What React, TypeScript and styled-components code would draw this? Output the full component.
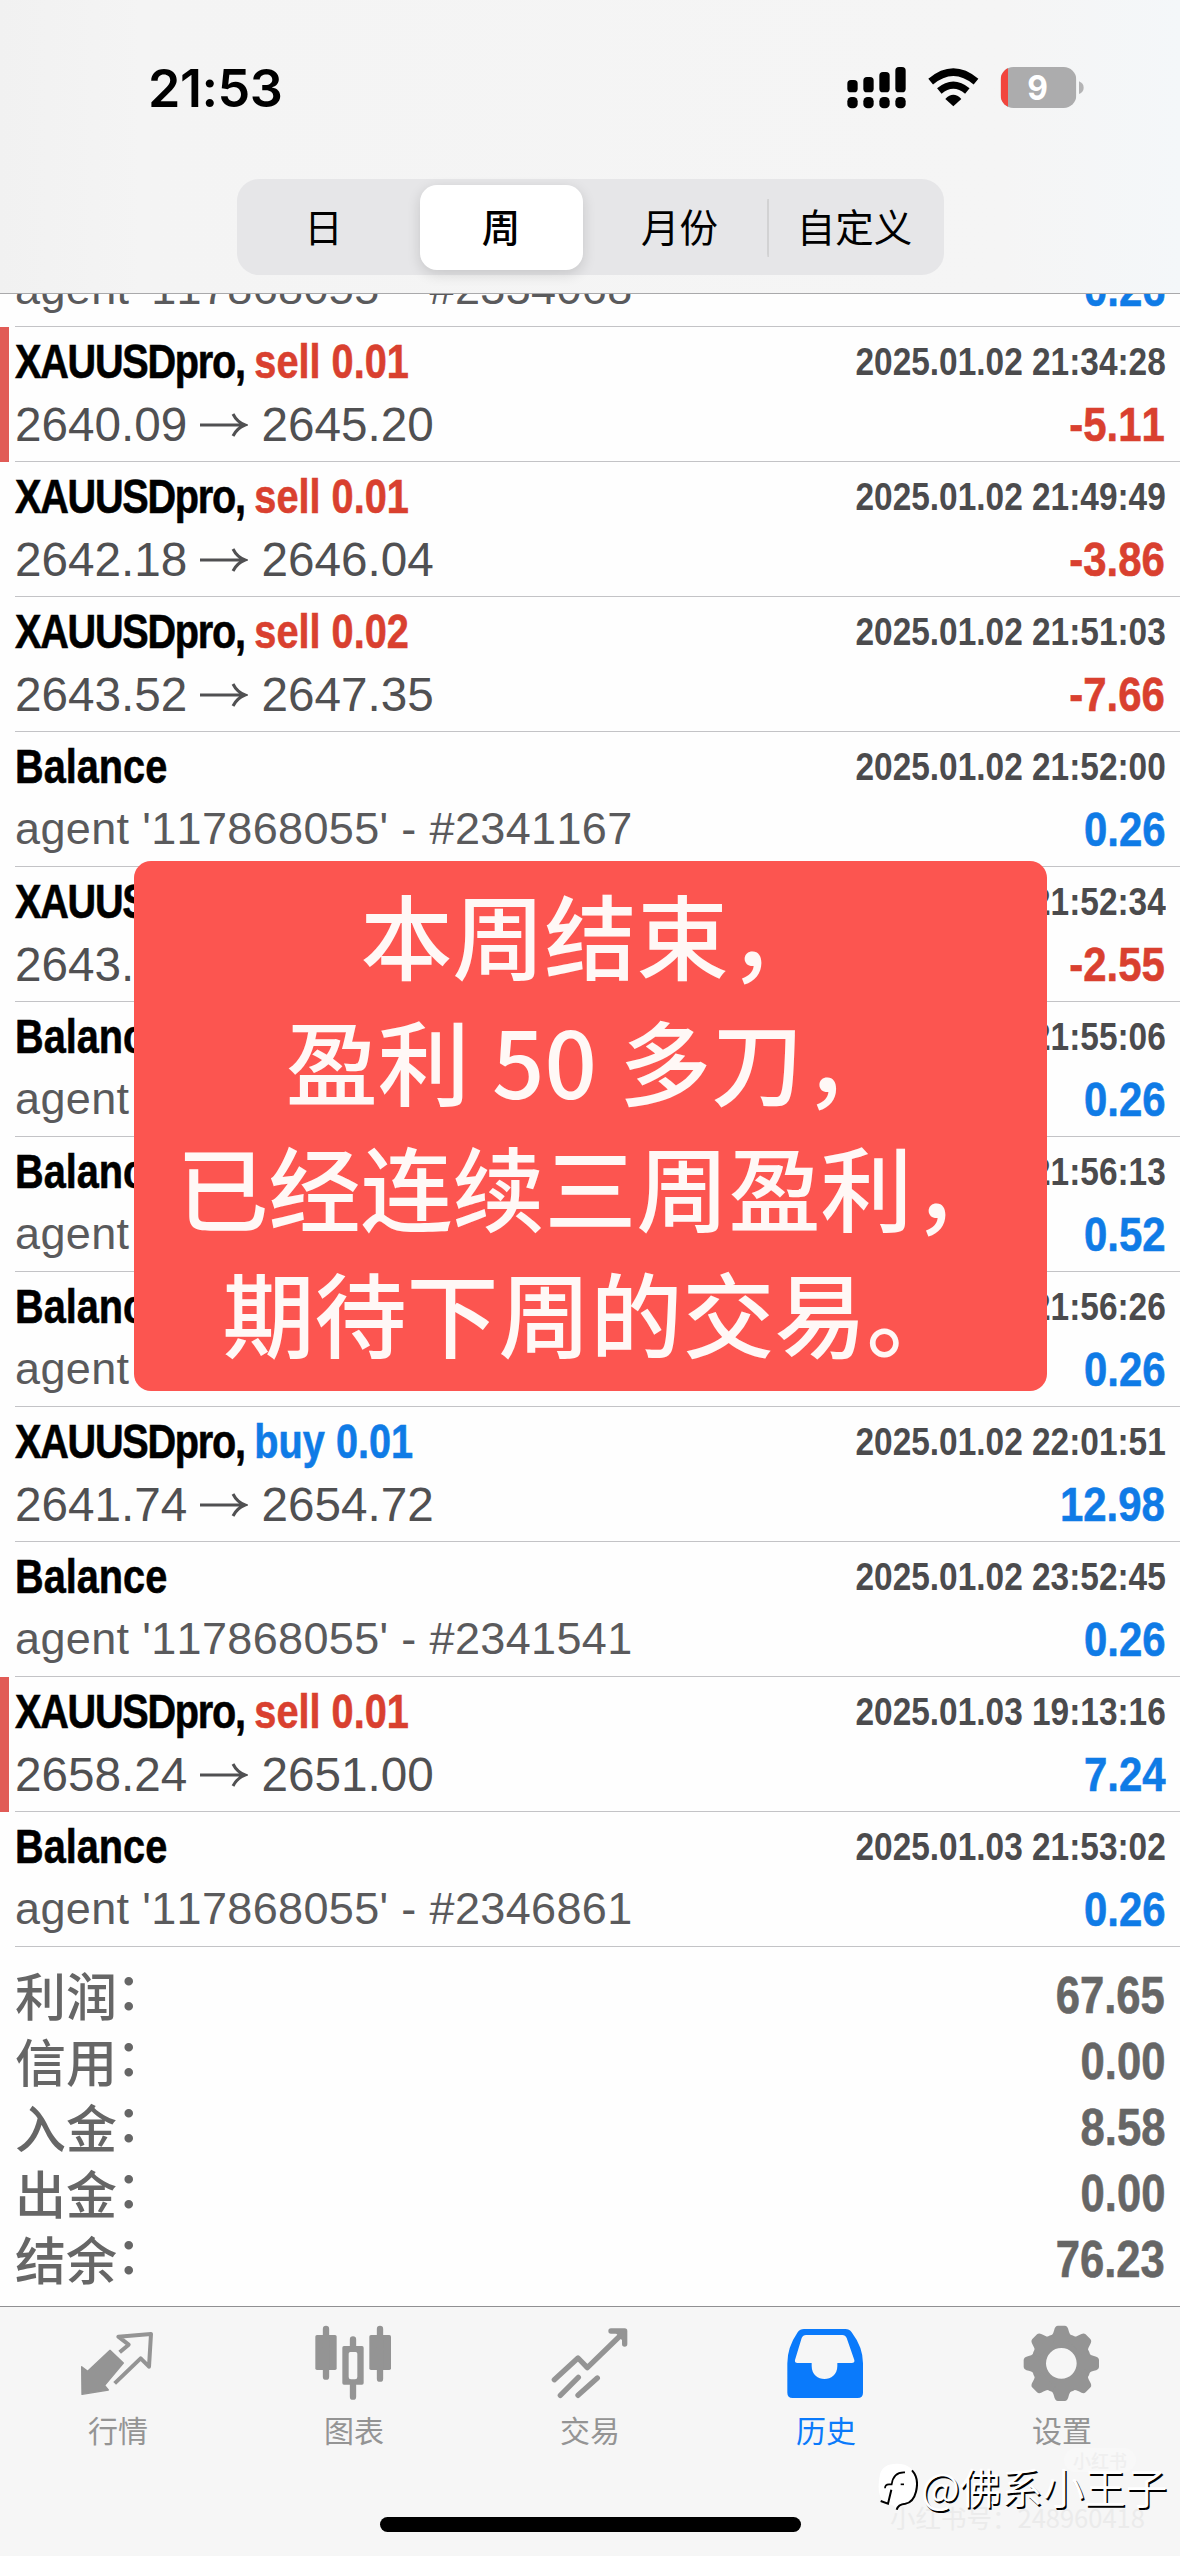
import React from 'react';
import styled, { createGlobalStyle } from 'styled-components';

const sans = `"Liberation Sans", "Noto Sans CJK SC", sans-serif`;
const cjk = `"Noto Sans CJK SC", sans-serif`;

const RED = '#d9402f';
const BLUE = '#0f7be6';

const GlobalStyle = createGlobalStyle`
  * { box-sizing: border-box; }
  body { margin: 0; background: #fefefe; font-family: ${sans}; font-kerning: none; }
`;

const Screen = styled.div`
  position: relative;
  width: 1180px;
  height: 2556px;
  overflow: hidden;
  display: flex;
  flex-direction: column;
  background: #fefefe;
`;

const Header = styled.header`
  height: 294px;
  flex: none;
  display: flex;
  flex-direction: column;
  align-items: center;
  background: linear-gradient(90deg, #f1f1f1 0%, #f4f4f4 12%, #f5f5f5 85%, #f4f7f9 100%);
  border-bottom: 1px solid #a9a9ab;
`;

const StatusBar = styled.div`
  width: 100%;
  height: 179px;
  padding: 51px 94px 0 148px;
  display: flex;
  justify-content: space-between;
  align-items: flex-start;
`;

const StatusBarIcons = styled.div`
  padding-top: 15px;
`;

const Clock = styled.span`
  font: 600 52px/75px Inter, sans-serif;
  letter-spacing: -0.5px;
  color: #000;
`;

const Segments = styled.nav`
  width: 707px;
  height: 96px;
  padding: 6px 7px 5px;
  display: flex;
  align-items: stretch;
  border-radius: 22px;
  background: #e6e6e8;
`;

const Segment = styled.button<{ $selected?: boolean; $divided?: boolean; $width: number; $inset?: string }>`
  flex: 0 0 ${p => p.$width}px;
  display: flex;
  align-items: center;
  justify-content: center;
  padding: ${p => p.$inset ?? '0 0 6px'};
  border: 0;
  border-radius: 17px;
  background: ${p => (p.$selected ? '#fff' : p.$divided ? 'linear-gradient(#d2d2d3, #d2d2d3) 0 50% / 2px 58px no-repeat' : 'transparent')};
  box-shadow: ${p => (p.$selected ? '0 4px 14px rgba(0, 0, 0, 0.14)' : 'none')};
  font: ${p => (p.$selected ? 500 : 400)} 38.5px/60px ${cjk};
  color: #000;
`;

const List = styled.main`
  flex: none;
  height: 1653px;
  display: flex;
  flex-direction: column;
`;

const Row = styled.article<{ $marked?: boolean; $height?: number }>`
  height: ${p => p.$height ?? 135}px;
  flex: none;
  overflow: hidden;
  display: flex;
  align-items: flex-end;
  border-left: 9px solid ${p => (p.$marked ? '#e15b56' : 'transparent')};
  padding-left: 6px;
`;

const RowBody = styled.div`
  flex: 1;
  height: 135px;
  padding: 4px 14px 0 0;
  border-bottom: 1px solid #c3c3c6;
`;

const Line = styled.div<{ $height: number }>`
  height: ${p => p.$height}px;
  display: flex;
  justify-content: space-between;
  align-items: center;
  white-space: pre;
`;

const Title = styled.span`
  font-size: 49px;
  line-height: 60px;
  font-weight: 700;
  color: #000;
  -webkit-text-stroke: 0.6px;
  transform: scaleX(0.81);
  transform-origin: left;
`;

const Symbol = styled.span`
  letter-spacing: -1.6px;
`;

const Side = styled.span<{ $color: string }>`
  color: ${p => p.$color};
`;

const Stamp = styled.span`
  font-size: 39.5px;
  font-weight: 700;
  color: #4b4b4d;
  transform: scaleX(0.846);
  transform-origin: right;
`;

const Detail = styled.span`
  display: flex;
  align-items: center;
  gap: 13px;
  padding-top: 1px;
  font-size: 47.7px;
  line-height: 62px;
  color: #505052;
`;

const Comment = styled.span`
  font-size: 45px;
  line-height: 62px;
  letter-spacing: 0.35px;
  color: #5a5a5c;
`;

const Amount = styled.span<{ $color: string; $size?: number }>`
  padding-right: 1px;
  font-size: ${p => p.$size ?? 49}px;
  line-height: 62px;
  font-weight: 700;
  color: ${p => p.$color};
  -webkit-text-stroke: 0.6px;
  transform: scaleX(0.855);
  transform-origin: right;
`;

const Summary = styled.section`
  flex: none;
  height: 359px;
  padding: 16px 14px 0 15px;
`;

const SummaryLabel = styled.span`
  padding-bottom: 4px;
  font: 500 51px/62px ${cjk};
  color: #666;
`;

const Colon = styled.span`
  display: inline-block;
  transform: translate(-1px, -6px);
`;

const TabBar = styled.footer`
  flex: none;
  height: 250px;
  display: flex;
  flex-direction: column;
  align-items: center;
  background: #f6f6f6;
  border-top: 1px solid #909092;
`;

const Tabs = styled.div`
  width: 100%;
  display: grid;
  grid-template-columns: repeat(5, 1fr);
  padding-top: 15px;
`;

const Tab = styled.div<{ $active?: boolean }>`
  display: flex;
  flex-direction: column;
  align-items: center;
  gap: 4px;
  color: ${p => (p.$active ? '#0a7afb' : '#949494')};
  font: 400 30px/46px ${cjk};

  svg { display: block; }
`;

const HomeIndicator = styled.div`
  width: 421px;
  height: 15px;
  margin-top: 65px;
  border-radius: 8px;
  background: #000;
`;

const Caption = styled.div`
  position: absolute;
  left: 134px;
  top: 861px;
  width: 913px;
  height: 530px;
  padding-top: 9px;
  border-radius: 17px;
  background: #fc5550;
  text-align: center;
  white-space: pre;
  font: 500 92px/126px ${cjk};
  word-spacing: 1.5px;
  color: #fff8f6;
`;

const AccountMark = styled.div`
  position: absolute;
  left: 890px;
  top: 2501px;
  font: 400 25.5px/32px ${cjk};
  white-space: pre;
  color: #ebebeb;
`;

const AppMark = styled.div`
  position: absolute;
  left: 1064px;
  top: 2448px;
  padding: 0 9px;
  border-radius: 12px;
  background: #f8f8f8;
  font: 500 18px/24px ${cjk};
  color: #efefef;
`;

const AuthorMark = styled.div`
  position: absolute;
  left: 876px;
  top: 2460px;
  display: flex;
  align-items: center;
  gap: 3px;
  font: 350 41.5px/52px ${cjk};
  white-space: nowrap;
  color: #fff;
  text-shadow: 1.5px 1.5px 0 #000;
`;

const Arrow = () => (
  <svg width="48" height="28" viewBox="0 0 48 28" fill="none" stroke="#505052" strokeWidth="3">
    <path d="M0 14H44M33 3Q37 11 45 14Q37 17 33 25" />
  </svg>
);

const StatusIcons = () => (
  <svg width="240" height="45" viewBox="48 48 720 135">
    <g fill="#000">
      <rect x="52" y="90" width="31" height="37" rx="11" />
      <rect x="100" y="81" width="31" height="46" rx="11" />
      <rect x="148" y="66" width="31" height="61" rx="11" />
      <rect x="196" y="51" width="31" height="76" rx="11" />
      <rect x="52" y="141" width="31" height="34" rx="13" />
      <rect x="100" y="141" width="31" height="34" rx="13" />
      <rect x="148" y="141" width="31" height="34" rx="13" />
      <rect x="196" y="141" width="31" height="34" rx="13" />
    </g>
    <g fill="none" stroke="#000">
      <path d="M302 95Q370 38 438 95" strokeWidth="22" />
      <path d="M328 123Q370 88 412 123" strokeWidth="21" />
    </g>
    <path d="M346 147Q370 122 394 147L370 169Z" />
    <clipPath id="cell"><rect x="512" y="51" width="227" height="123" rx="38" /></clipPath>
    <g clipPath="url(#cell)">
      <path fill="#acacad" d="M512 51H739V174H512Z" />
      <path fill="#f2453d" d="M512 51H534V174H512Z" />
    </g>
    <path fill="#b4b4b5" d="M747 94Q761 100 761 113Q761 126 747 132Z" />
    <text x="623" y="151" textAnchor="middle" fontFamily="Inter, sans-serif" fontWeight="700" fontSize="104" textLength="62" lengthAdjust="spacingAndGlyphs" fill="#fff">9</text>
  </svg>
);

const TabIcon = ({ x, children }: { x: number; children: React.ReactNode }) => (
  <svg width="80" height="80" viewBox={`${x} 36 240 240`} fill="currentColor" stroke="none">{children}</svg>
);

const QuotesIcon = () => (
  <TabIcon x={54}>
    <path strokeWidth="4" strokeLinejoin="round" stroke="currentColor" d="M65 170L83 184L150 121L190 159L134 226L145 240L66 253Z" />
    <path fill="none" stroke="currentColor" strokeWidth="12" strokeLinejoin="round" d="M179 127L206 104L175 80L273 72L267 170L242 145L164 220" />
  </TabIcon>
);

const ChartIcon = () => (
  <TabIcon x={762}>
    <rect x="766" y="75" width="64" height="105" rx="5" />
    <rect x="928" y="75" width="65" height="105" rx="5" />
    <path fill="none" stroke="currentColor" strokeWidth="19" strokeLinecap="round" d="M798 57V200M960 57V206M879 88V108M879 225V260" />
    <path fillRule="evenodd" d="M852 108H906Q911 108 911 113V219Q911 224 906 224H852Q847 224 847 219V113Q847 108 852 108ZM871 126Q866 126 866 131V201Q866 208 873 208H885Q892 208 892 201V131Q892 126 887 126Z" />
  </TabIcon>
);

const TradeIcon = () => (
  <TabIcon x={30}>
    <g fill="none" stroke="currentColor" strokeWidth="16" strokeLinecap="round" strokeLinejoin="round">
      <path d="M43 209L114 144L142 173L246 72" />
      <path d="M213 63H254V102" />
      <path d="M61 256L115 202M114 256L172 204" />
    </g>
    <path d="M222 63H256V102Z" />
  </TabIcon>
);

const HistoryIcon = () => (
  <TabIcon x={738}>
    <path fillRule="evenodd" d="M792 57H916Q928 57 935 67Q969 112 969 160V248Q969 264 953 264H758Q742 264 742 248V160Q742 112 773 67Q780 57 792 57ZM798 75Q789 75 785 84L765 150Q763 159 773 159H815V168C815 220 892 220 892 168V159H935Q945 159 943 150L920 84Q916 75 907 75Z" />
  </TabIcon>
);

const SettingsIcon = () => (
  <TabIcon x={486}>
    <circle cx="604" cy="160" r="68" fill="none" stroke="currentColor" strokeWidth="44" />
    {[0, 45, 90, 135, 180, 225, 270, 315].map(angle => (
      <path key={angle} transform={`rotate(${angle} 604 160)`} d="M566 84Q578 78 582 62Q585 47 594 47H614Q623 47 626 62Q630 78 642 84V98H566Z" />
    ))}
  </TabIcon>
);

const BlobIcon = () => (
  <svg width="42" height="50" viewBox="0 0 126 150">
    <path fill="#fff" d="M12 40Q20 8 62 8Q116 8 120 60Q122 110 88 130Q70 128 62 146Q54 128 30 128Q-2 108 12 40Z" />
    <g fill="none" stroke="#000">
      <path strokeWidth="5" d="M27 82Q27 70 39 70H47Q52 32 87 34" />
      <path strokeWidth="6" d="M46 86L36 128L14 120" />
      <path strokeWidth="6" d="M108 28Q130 52 120 92Q112 124 88 128Q66 130 62 146" />
      <path strokeWidth="5" d="M74 70H84" />
    </g>
  </svg>
);

type Deal = {
  symbol: string;
  side?: 'sell' | 'buy';
  lots?: string;
  time: string;
  open?: string;
  close?: string;
  comment?: string;
  amount: string;
  marked?: boolean;
};

const agent = (id: string) => `agent '117868055' - #${id}`;

const deals: Deal[] = [
  { symbol: 'XAUUSDpro', side: 'sell', lots: '0.01', time: '2025.01.02 21:34:28', open: '2640.09', close: '2645.20', amount: '-5.11', marked: true },
  { symbol: 'XAUUSDpro', side: 'sell', lots: '0.01', time: '2025.01.02 21:49:49', open: '2642.18', close: '2646.04', amount: '-3.86' },
  { symbol: 'XAUUSDpro', side: 'sell', lots: '0.02', time: '2025.01.02 21:51:03', open: '2643.52', close: '2647.35', amount: '-7.66' },
  { symbol: 'Balance', time: '2025.01.02 21:52:00', comment: agent('2341167'), amount: '0.26' },
  { symbol: 'XAUUSDpro', time: '2025.01.02 21:52:34', open: '2643.', amount: '-2.55' },
  { symbol: 'Balance', time: '2025.01.02 21:55:06', comment: 'agent', amount: '0.26' },
  { symbol: 'Balance', time: '2025.01.02 21:56:13', comment: 'agent', amount: '0.52' },
  { symbol: 'Balance', time: '2025.01.02 21:56:26', comment: 'agent', amount: '0.26' },
  { symbol: 'XAUUSDpro', side: 'buy', lots: '0.01', time: '2025.01.02 22:01:51', open: '2641.74', close: '2654.72', amount: '12.98' },
  { symbol: 'Balance', time: '2025.01.02 23:52:45', comment: agent('2341541'), amount: '0.26' },
  { symbol: 'XAUUSDpro', side: 'sell', lots: '0.01', time: '2025.01.03 19:13:16', open: '2658.24', close: '2651.00', amount: '7.24', marked: true },
  { symbol: 'Balance', time: '2025.01.03 21:53:02', comment: agent('2346861'), amount: '0.26' },
];

const totals = [
  ['利润', '67.65'],
  ['信用', '0.00'],
  ['入金', '8.58'],
  ['出金', '0.00'],
  ['结余', '76.23'],
];

const DealRow = ({ deal }: { deal: Deal }) => (
  <Row $marked={deal.marked}>
    <RowBody>
      <Line $height={60}>
        <Title>
          {deal.side ? (
            <>
              <Symbol>{deal.symbol}, </Symbol>
              <Side $color={deal.side === 'buy' ? BLUE : RED}>{deal.side} {deal.lots}</Side>
            </>
          ) : deal.open ? <Symbol>{deal.symbol}</Symbol> : deal.symbol}
        </Title>
        <Stamp>{deal.time}</Stamp>
      </Line>
      <Line $height={66}>
        {deal.comment ? <Comment>{deal.comment}</Comment> : (
          <Detail>
            <span>{deal.open}</span>
            {deal.close && <><Arrow /><span>{deal.close}</span></>}
          </Detail>
        )}
        <Amount $color={deal.amount.startsWith('-') ? RED : BLUE}>{deal.amount}</Amount>
      </Line>
    </RowBody>
  </Row>
);

export default function App() {
  return (
    <Screen>
      <GlobalStyle />
      <Header>
        <StatusBar>
          <Clock>21:53</Clock>
          <StatusBarIcons><StatusIcons /></StatusBarIcons>
        </StatusBar>
        <Segments>
          <Segment $width={176} $inset="0 16px 6px 0">日</Segment>
          <Segment $width={163} $selected>周</Segment>
          <Segment $width={184} $inset="0 0 6px 10px">月份</Segment>
          <Segment $width={176} $divided>自定义</Segment>
        </Segments>
      </Header>
      <List>
        <Row $height={33}>
          <RowBody>
            <Line $height={60} />
            <Line $height={66}>
              <Comment>{agent('2334068')}</Comment>
              <Amount $color={BLUE}>0.26</Amount>
            </Line>
          </RowBody>
        </Row>
        {deals.map(deal => <DealRow key={deal.time} deal={deal} />)}
      </List>
      <Summary>
        {totals.map(([label, value]) => (
          <Line key={label} $height={66}>
            <SummaryLabel>{label}<Colon>：</Colon></SummaryLabel>
            <Amount $color="#666" $size={51}>{value}</Amount>
          </Line>
        ))}
      </Summary>
      <TabBar>
        <Tabs>
          <Tab><QuotesIcon />行情</Tab>
          <Tab><ChartIcon />图表</Tab>
          <Tab><TradeIcon />交易</Tab>
          <Tab $active><HistoryIcon />历史</Tab>
          <Tab><SettingsIcon />设置</Tab>
        </Tabs>
        <HomeIndicator />
      </TabBar>
      <Caption>{'本周结束，\n盈利 50 多刀，\n已经连续三周盈利，\n期待下周的交易。'}</Caption>
      <AppMark>小红书</AppMark>
      <AccountMark>小红书号：248960418</AccountMark>
      <AuthorMark><BlobIcon />@佛系小王子</AuthorMark>
    </Screen>
  );
}
